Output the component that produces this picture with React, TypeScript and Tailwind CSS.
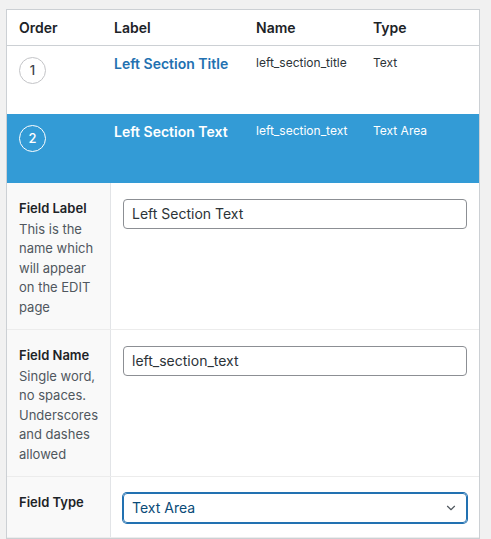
import { ChevronDown } from 'lucide-react'

type Field = { order: number; label: string; name: string; type: string; active?: boolean }

const fields: Field[] = [
  { order: 1, label: 'Left Section Title', name: 'left_section_title', type: 'Text' },
  { order: 2, label: 'Left Section Text', name: 'left_section_text', type: 'Text Area', active: true },
]

function FieldRow({ f }: { f: Field }) {
  const on = f.active
  return (
    <div
      className={`grid grid-cols-[95px_142px_117px_1fr] ${on ? 'h-[69px] bg-[#339bd6] text-white' : 'h-[68px] bg-white'}`}
    >
      <div className="pl-[12px] pt-[11px]">
        <span
          className={`flex h-[27px] w-[27px] items-center justify-center rounded-full border text-[13px] font-medium ${
            on ? 'border-white text-white' : 'border-[#c3c4c7] text-[#3c434a]'
          }`}
        >
          {f.order}
        </span>
      </div>
      <div className={`pl-[12px] pt-[8px] text-[14px] leading-5 font-semibold ${on ? 'text-white' : 'text-[#2271b1]'}`}>
        {f.label}
      </div>
      <div className={`pl-[12px] pt-[7px] text-[12px] leading-5 ${on ? '' : 'text-[#2c3338]'}`}>{f.name}</div>
      <div className={`pl-[12px] pt-[7px] text-[12px] leading-5 ${on ? '' : 'text-[#2c3338]'}`}>{f.type}</div>
    </div>
  )
}

function EditRow({ title, help, children }: { title: string; help?: string; children: React.ReactNode }) {
  return (
    <div className="grid grid-cols-[104px_1fr] border-b border-[#ececec]">
      <div className="border-r border-[#e2e4e7] bg-[#f9f9f9] px-[12px] pt-[15.5px] pb-[12px] text-[13px] leading-[19.5px]">
        <div className="mb-[1.5px] font-semibold text-[#1d2327]">{title}</div>
        {help && <div className="text-[#50575e]">{help}</div>}
      </div>
      <div className="px-[12px] pt-[15.5px]">{children}</div>
    </div>
  )
}

export default function App() {
  return (
    <div className="min-h-screen bg-[#f1f1f1] pt-[9px] pl-[6px] font-['Inter',sans-serif]">
      <div className="w-[474px] border border-[#ccd0d4] bg-white">
        <div className="grid h-[36px] grid-cols-[95px_142px_117px_1fr] items-center border-b border-[#ccd0d4] text-[14px] font-semibold text-[#1d2327]">
          <div className="pl-[12px]">Order</div>
          <div className="pl-[12px]">Label</div>
          <div className="pl-[12px]">Name</div>
          <div className="pl-[12px]">Type</div>
        </div>

        {fields.map((f) => (
          <FieldRow key={f.order} f={f} />
        ))}

        <EditRow title="Field Label" help="This is the name which will appear on the EDIT page">
          <input
            readOnly
            value="Left Section Text"
            className="h-[30px] w-full rounded-[4px] border border-[#8c8f94] bg-white px-[8px] text-[14px] text-[#2c3338] outline-none"
          />
        </EditRow>

        <EditRow title="Field Name" help="Single word, no spaces. Underscores and dashes allowed">
          <input
            readOnly
            value="left_section_text"
            className="h-[30px] w-full rounded-[4px] border border-[#8c8f94] bg-white px-[8px] text-[14px] text-[#2c3338] outline-none"
          />
        </EditRow>

        <EditRow title="Field Type">
          <div className="relative mb-[14px]">
            <div className="flex h-[30px] w-full items-center rounded-[4px] border border-[#2271b1] pl-[8px] text-[14px] text-[#0a4b78] shadow-[0_0_0_1px_#2271b1]">
              Text Area
            </div>
            <ChevronDown
              size={14}
              strokeWidth={2}
              className="absolute right-[9px] top-1/2 -translate-y-1/2 text-[#50575e]"
            />
          </div>
        </EditRow>
      </div>
    </div>
  )
}
